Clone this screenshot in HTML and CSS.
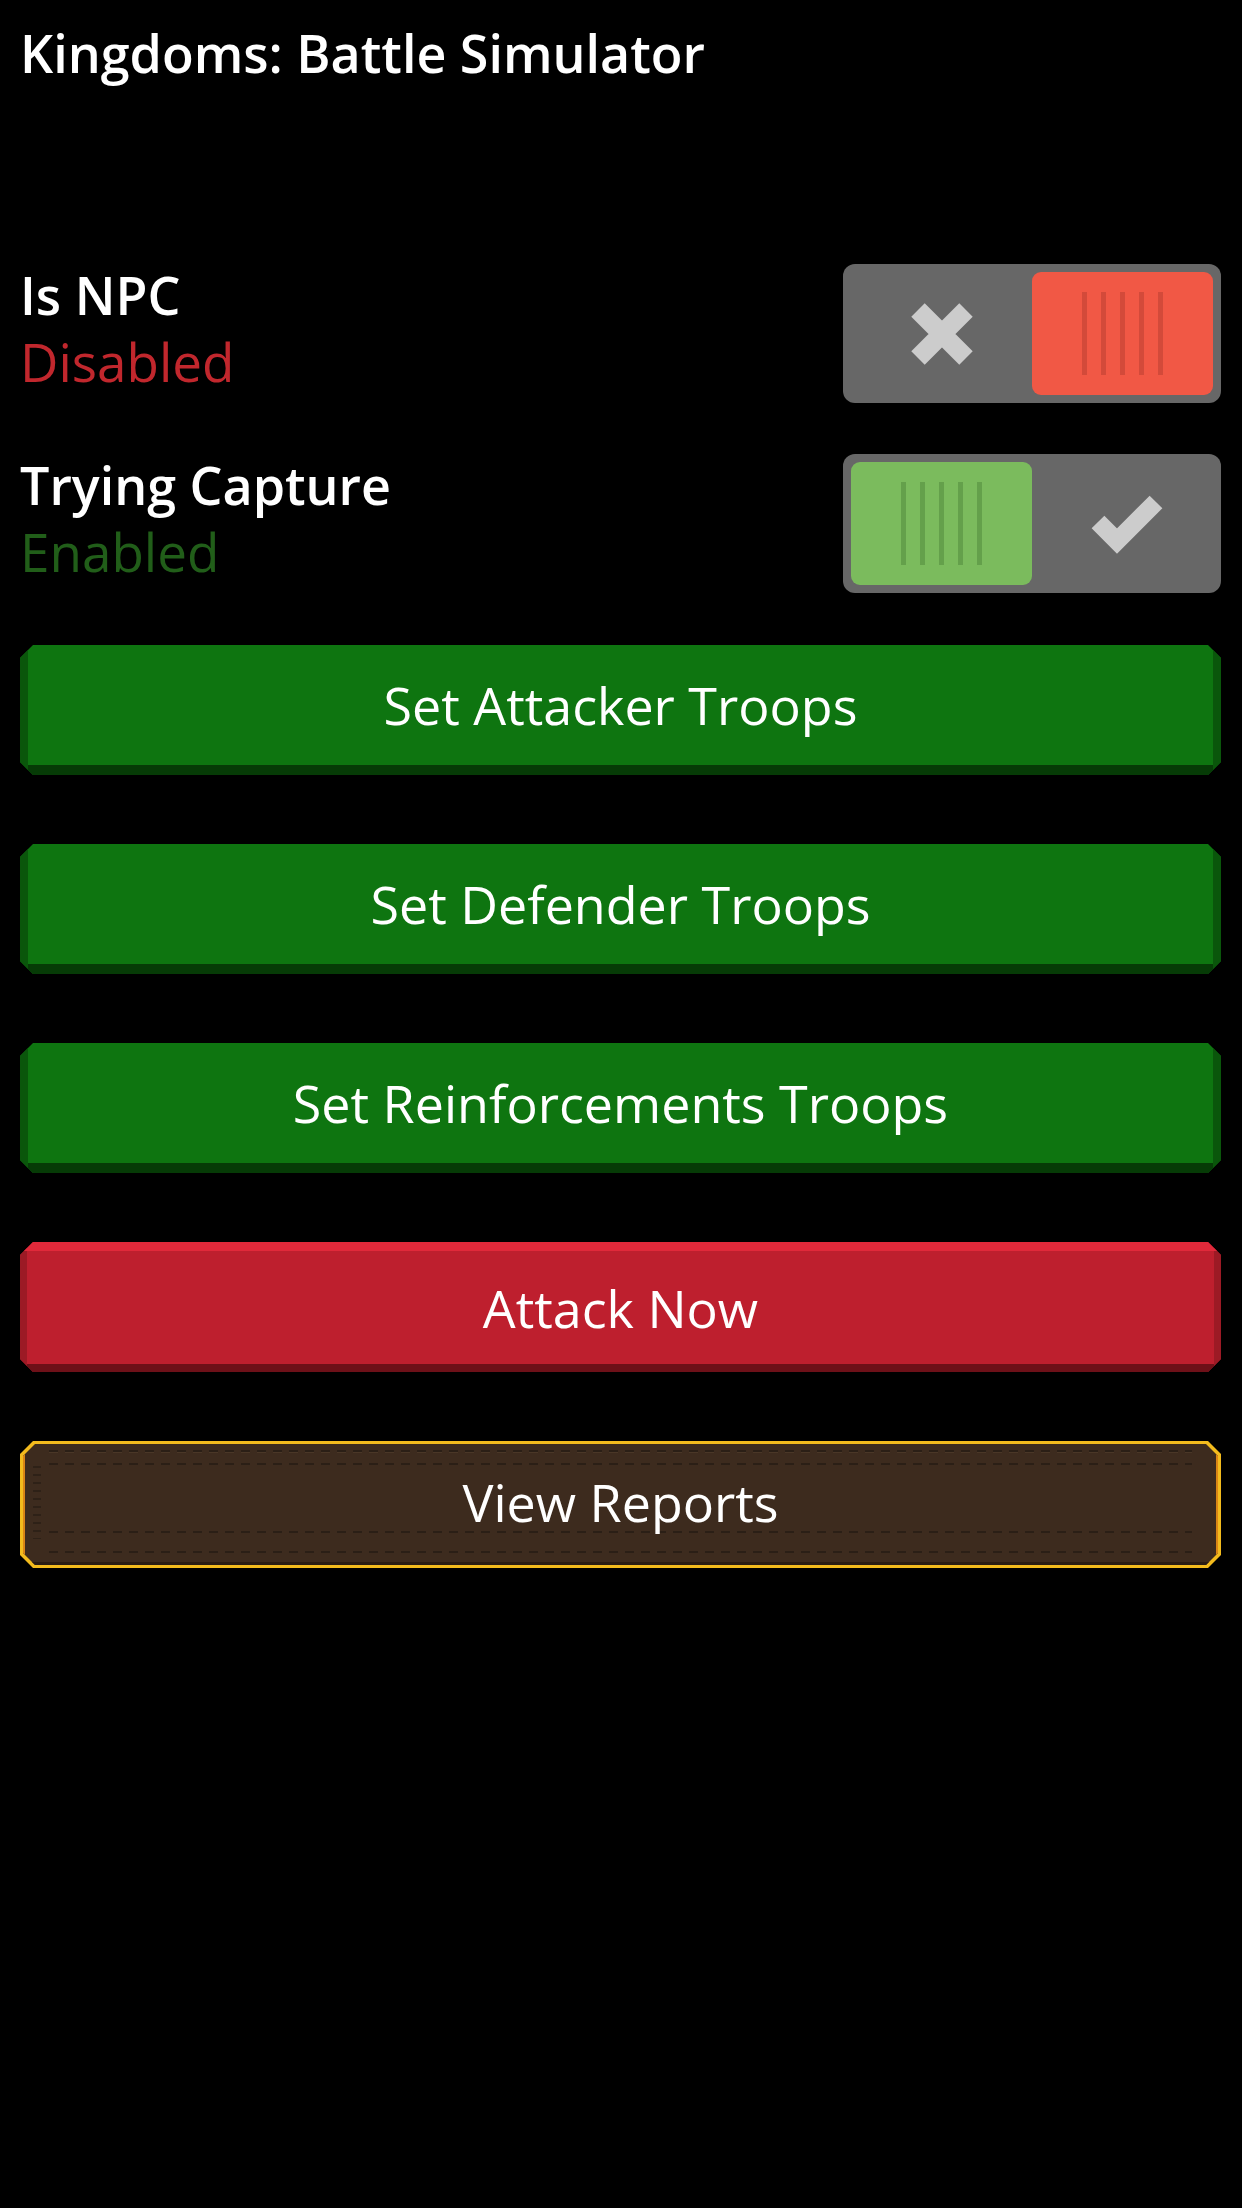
FILE: index.html
```html
<!DOCTYPE html>
<html lang="en">
<head>
<meta charset="utf-8">
<title>Kingdoms: Battle Simulator</title>
<link rel="stylesheet" href="styles.css">
</head>
<body>
<div class="page">
  <h1 class="title">Kingdoms: Battle Simulator</h1>

  <div class="settings">
    <div class="setting">
      <div class="setting-text">
        <div class="setting-name">Is NPC</div>
        <div class="setting-state state-off">Disabled</div>
      </div>
      <div class="toggle">
        <div class="toggle-icon">
          <svg width="62" height="62" viewBox="0 0 62 62"><path d="M7 7 L55 55 M55 7 L7 55" stroke="#cccccc" stroke-width="19" fill="none" stroke-linecap="butt"/></svg>
        </div>
        <div class="knob knob-red">
          <span></span><span></span><span></span><span></span><span></span>
        </div>
      </div>
    </div>

    <div class="setting">
      <div class="setting-text">
        <div class="setting-name">Trying Capture</div>
        <div class="setting-state state-on">Enabled</div>
      </div>
      <div class="toggle">
        <div class="knob knob-green">
          <span></span><span></span><span></span><span></span><span></span>
        </div>
        <div class="toggle-icon icon-check">
          <svg width="78" height="70" viewBox="0 0 78 70"><path d="M10 33 L29 52 L68 13" stroke="#cccccc" stroke-width="18" fill="none" stroke-linecap="butt" stroke-linejoin="miter"/></svg>
        </div>
      </div>
    </div>
  </div>

  <div class="actions">
    <button class="btn btn-green"><span class="btn-label">Set Attacker Troops</span></button>
    <button class="btn btn-green"><span class="btn-label">Set Defender Troops</span></button>
    <button class="btn btn-green"><span class="btn-label">Set Reinforcements Troops</span></button>
    <button class="btn btn-red"><span class="btn-label">Attack Now</span></button>
    <button class="btn btn-gold"><span class="btn-face"><span class="btn-label">View Reports</span></span></button>
  </div>
</div>
</body>
</html>
```

FILE: styles.css
```css
html, body {
  margin: 0;
  padding: 0;
  background: #000000;
}

body {
  font-family: "Open Sans", "Noto Sans", sans-serif;
  color: #ffffff;
}

.page {
  padding: 19px 21px 0 20px;
}

.title {
  margin: 0;
  font-size: 52px;
  line-height: 67px;
  font-weight: 600;
  color: #ffffff;
}

.settings {
  margin-top: 175px;
  display: flex;
  flex-direction: column;
  gap: 48px;
}

.setting {
  display: flex;
  justify-content: space-between;
  align-items: flex-start;
}

.setting-name {
  font-size: 52px;
  line-height: 67px;
  font-weight: 600;
  color: #ffffff;
}

.setting-state {
  font-size: 53px;
  line-height: 67px;
  font-weight: 400;
}

.state-off { color: #c1272d; }
.state-on { color: #215e19; }

.toggle {
  margin-top: 3px;
  width: 378px;
  height: 139px;
  box-sizing: border-box;
  padding: 8px;
  border-radius: 12px;
  background: #676767;
  display: flex;
}

.toggle-icon {
  flex: 1;
  display: flex;
  align-items: center;
  justify-content: center;
}

.icon-check {
  padding-left: 8px;
}

.knob {
  width: 181px;
  height: 100%;
  border-radius: 9px;
  display: flex;
  align-items: center;
  justify-content: center;
  gap: 14px;
}

.knob span {
  width: 5px;
  height: 83px;
}

.knob-red { background: #f15845; }
.knob-red span { background: #d34a3a; }
.knob-green { background: #7bbb5d; }
.knob-green span { background: #64a04b; }

.actions {
  margin-top: 52px;
  display: flex;
  flex-direction: column;
  gap: 69px;
}

.btn {
  display: block;
  width: 100%;
  height: 130px;
  border: 0;
  margin: 0;
  padding: 0;
  font-family: "Open Sans", "Noto Sans", sans-serif;
  font-size: 52px;
  font-weight: 400;
  color: #ffffff;
  clip-path: polygon(13px 0, calc(100% - 13px) 0, 100% 13px, 100% calc(100% - 13px), calc(100% - 13px) 100%, 13px 100%, 0 calc(100% - 13px), 0 13px);
}

.btn-label {
  display: block;
  line-height: 1;
}

.btn-green {
  padding-bottom: 10px;
  background: #0e7510;
  box-shadow: inset 8px 0 0 #0a560b, inset -8px 0 0 #0a560b, inset 0 -10px 0 #063b06;
}

.btn-red {
  padding: 9px 0 8px;
  background: #be1f2e;
  box-shadow: inset 0 9px 0 #e1293a, inset 7px 0 0 #9c1a25, inset -7px 0 0 #9c1a25, inset 0 -8px 0 #6e1018;
}

.btn-gold {
  height: 127px;
  padding: 3px;
  background: #f3bb1d;
}

.btn-face {
  position: relative;
  display: flex;
  align-items: center;
  justify-content: center;
  height: 100%;
  background: #3d2b1e;
  box-shadow: inset 2px 0 0 #d98616, inset -2px 0 0 #d98616, inset 0 -3px 0 #2a1d14;
  clip-path: polygon(12px 0, calc(100% - 12px) 0, 100% 12px, 100% calc(100% - 12px), calc(100% - 12px) 100%, 12px 100%, 0 calc(100% - 12px), 0 12px);
}

.btn-face::before {
  content: "";
  position: absolute;
  left: 26px;
  right: 26px;
  top: 6px;
  bottom: 12px;
  background:
    repeating-linear-gradient(90deg, #2b1f16 0 9px, transparent 9px 16px) 0 0 / 100% 2px no-repeat,
    repeating-linear-gradient(90deg, #4a3727 0 9px, transparent 9px 16px) 0 2px / 100% 1px no-repeat,
    repeating-linear-gradient(90deg, #2b1f16 0 9px, transparent 9px 16px) 0 13px / 100% 2px no-repeat,
    repeating-linear-gradient(90deg, #2b1f16 0 9px, transparent 9px 16px) 0 81px / 100% 2px no-repeat,
    repeating-linear-gradient(90deg, #2b1f16 0 9px, transparent 9px 16px) 0 100% / 100% 2px no-repeat;
}

.btn-face::after {
  content: "";
  position: absolute;
  left: 10px;
  top: 22px;
  bottom: 26px;
  width: 8px;
  background: repeating-linear-gradient(180deg, #2e2117 0 2px, transparent 2px 8px);
}

.btn-face .btn-label {
  position: relative;
  margin-top: -6px;
}
```
